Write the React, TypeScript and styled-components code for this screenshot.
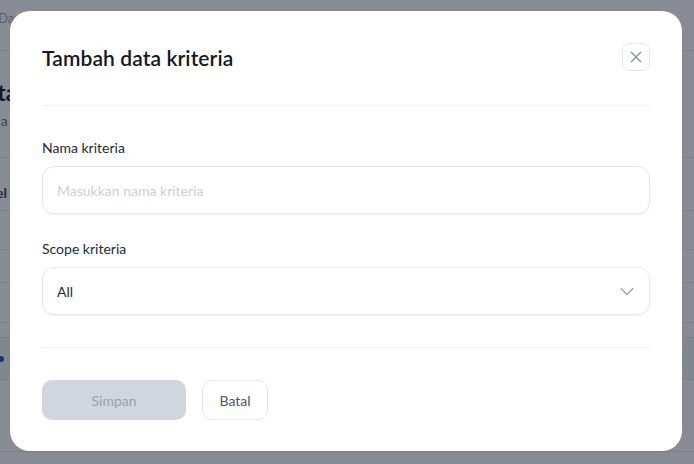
import React from "react";
import styled, { createGlobalStyle } from "styled-components";

const GlobalStyle = createGlobalStyle`
  * { box-sizing: border-box; }
  html, body { margin: 0; padding: 0; }
  body {
    font-family: "Lato", "Noto Sans", sans-serif;
    background: #ffffff;
    width: 694px;
    height: 464px;
    overflow: hidden;
  }
`;

/* ---------- background page (dimmed) ---------- */
const Page = styled.div`
  height: 464px;
  margin-left: -40px;
  width: 760px;
  display: flex;
  flex-direction: column;
  color: #374151;
`;

const TopBar = styled.div`
  height: 51px;
  padding: 10px 0 0 38px;
  font-size: 13px;
  color: #9ca3af;
  border-bottom: 1px solid #e5e7eb;
`;

const PageHead = styled.div`
  height: 107px;
  padding: 28px 0 0 10px;
  border-bottom: 1px solid #e5e7eb;
`;

const PageTitle = styled.div`
  font-size: 22px;
  font-weight: 700;
  color: #111827;
`;

const PageSub = styled.div`
  margin-top: 6px;
  font-size: 14px;
  color: #6b7280;
`;

const PageRow = styled.div<{ $h: number; $bg?: string; $pt?: number }>`
  height: ${(p) => p.$h}px;
  display: flex;
  align-items: center;
  padding-left: 14px;
  padding-top: ${(p) => p.$pt || 0}px;
  font-size: 14px;
  border-bottom: 1px solid #e5e7eb;
  background: ${(p) => p.$bg || "transparent"};
`;

const Dot = styled.span`
  width: 6px;
  height: 6px;
  border-radius: 50%;
  background: #1d4ed8;
  margin-left: 24px;
`;

/* ---------- overlay / modal ---------- */
const Overlay = styled.div`
  position: fixed;
  inset: 0;
  background: rgba(17, 24, 39, 0.5);
  display: flex;
  align-items: center;
  justify-content: center;
  padding: 0 2px 2px 0;
`;

const Modal = styled.div`
  width: 672px;
  height: 440px;
  background: #ffffff;
  border-radius: 20px;
  padding: 32px 32px 0;
  display: flex;
  flex-direction: column;
`;

const Header = styled.div`
  display: flex;
  align-items: center;
  justify-content: space-between;
  height: 28px;
`;

const Title = styled.h2`
  margin: 0;
  font-size: 21px;
  font-weight: 600;
  color: #111827;
  letter-spacing: 0.1px;
`;

const CloseButton = styled.button`
  width: 28px;
  height: 28px;
  border: 1px solid #e5e7eb;
  border-radius: 8px;
  background: #ffffff;
  display: flex;
  align-items: center;
  justify-content: center;
  padding: 0;
  color: #8b90a0;
  cursor: pointer;
`;

const Divider = styled.hr`
  margin: 0;
  border: none;
  border-top: 1px solid #eef0f3;
`;

const HeaderDivider = styled(Divider)`
  margin-top: 34px;
`;

const Body = styled.div`
  display: flex;
  flex-direction: column;
  gap: 25px;
  padding: 32px 0;
`;

const Field = styled.div`
  display: flex;
  flex-direction: column;
  gap: 8px;
`;

const Label = styled.label`
  font-size: 14px;
  line-height: 20px;
  font-weight: 400;
  color: #1f2937;
`;

const Control = styled.div`
  height: 48px;
  border: 1px solid #e5e7eb;
  border-radius: 12px;
  box-shadow: 0 1px 2px rgba(16, 24, 40, 0.05);
  display: flex;
  align-items: center;
  justify-content: space-between;
  padding: 0 14px 0 14px;
  background: #ffffff;
`;

const Input = styled.input`
  border: none;
  outline: none;
  width: 100%;
  font-family: inherit;
  font-size: 14px;
  color: #1f2937;
  padding: 0;
  background: transparent;
  &::placeholder {
    color: #cbd0d9;
  }
`;

const SelectValue = styled.span`
  font-size: 14px;
  color: #1f2937;
`;

const Footer = styled.div`
  display: flex;
  gap: 16px;
  padding-top: 32px;
`;

const Button = styled.button<{ $primary?: boolean }>`
  height: 40px;
  border-radius: 10px;
  font-family: inherit;
  font-size: 14px;
  padding: 0 16px;
  cursor: pointer;
  ${(p) =>
    p.$primary
      ? `
    width: 144px;
    background: #d1d5dd;
    color: #9ca0ad;
    border: none;
  `
      : `
    width: 66px;
    background: #ffffff;
    color: #4b5563;
    border: 1px solid #e5e7eb;
  `}
`;

const XIcon = () => (
  <svg width="16" height="16" viewBox="0 0 24 24" fill="none" stroke="currentColor" strokeWidth="2" strokeLinecap="round">
    <path d="M5 5l14 14M19 5L5 19" />
  </svg>
);

const Chevron = () => (
  <svg width="16" height="16" viewBox="0 0 16 16" fill="none" stroke="#9aa0ae" strokeWidth="1.3" strokeLinecap="round" strokeLinejoin="round">
    <path d="M2 5.5l6 6 6-6" />
  </svg>
);

export default function App() {
  return (
    <>
      <GlobalStyle />
      <Page>
        <TopBar>Dashboard</TopBar>
        <PageHead>
          <PageTitle>Data Kriteria</PageTitle>
          <PageSub>Kelola data kriteria</PageSub>
        </PageHead>
        <PageRow $h={53} $pt={16}>
          <b>Tabel kriteria</b>
        </PageRow>
        <PageRow $h={39} />
        <PageRow $h={33} />
        <PageRow $h={40}>Cari</PageRow>
        <PageRow $h={15} />
        <PageRow $h={42} $bg="#f3f4f6">
          <Dot />
        </PageRow>
        <PageRow $h={72} />
      </Page>
      <Overlay>
        <Modal>
          <Header>
            <Title>Tambah data kriteria</Title>
            <CloseButton aria-label="Tutup">
              <XIcon />
            </CloseButton>
          </Header>
          <HeaderDivider />
          <Body>
            <Field>
              <Label>Nama kriteria</Label>
              <Control>
                <Input placeholder="Masukkan nama kriteria" />
              </Control>
            </Field>
            <Field>
              <Label>Scope kriteria</Label>
              <Control>
                <SelectValue>All</SelectValue>
                <Chevron />
              </Control>
            </Field>
          </Body>
          <Divider />
          <Footer>
            <Button $primary>Simpan</Button>
            <Button>Batal</Button>
          </Footer>
        </Modal>
      </Overlay>
    </>
  );
}
